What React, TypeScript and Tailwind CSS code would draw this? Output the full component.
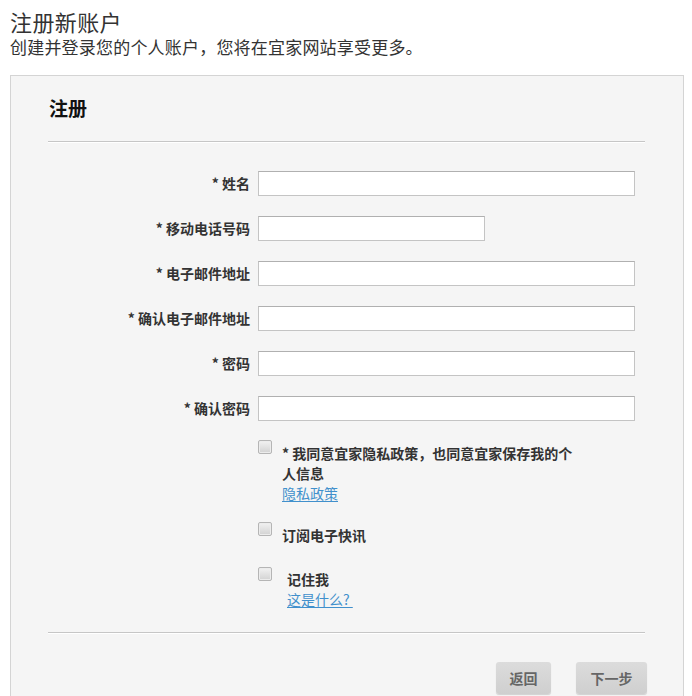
import React from "react";

const fields = [
  { label: "* 姓名", short: false },
  { label: "* 移动电话号码", short: true },
  { label: "* 电子邮件地址", short: false },
  { label: "* 确认电子邮件地址", short: false },
  { label: "* 密码", short: false },
  { label: "* 确认密码", short: false },
];

const Check = () => (
  <span className="block w-[14px] h-[14px] shrink-0 rounded-[2px] border border-[#b5b5b5] bg-gradient-to-b from-[#f2f2f2] to-[#d2d2d2] shadow-[inset_0_0_0_1px_#ececec]" />
);

const App = () => {
  return (
    <div
      className="w-[692px] h-[696px] overflow-hidden bg-white text-[#333]"
      style={{ fontFamily: '"Noto Sans CJK SC", "Noto Sans", sans-serif' }}
    >
      <div className="px-[10px] pt-[7px]">
        <h1 className="text-[22px] leading-[28px] font-normal tracking-[0.4px] text-[#333]">注册新账户</h1>
        <p className="text-[17px] leading-[24px] tracking-[0.2px] text-[#333]">
          创建并登录您的个人账户，您将在宜家网站享受更多。
        </p>
      </div>

      <div className="ml-[10px] mr-[8px] mt-[16px] h-[700px] border border-[#d4d4d4] bg-[#f5f5f5] pl-[37px] pr-[38px] pt-[18px]">
        <h2 className="pl-[1px] text-[19px] leading-[28px] font-bold text-[#111]">注册</h2>
        <div className="mt-[19px] border-t border-b border-t-[#c6c6c6] border-b-white" />

        <div className="mt-[28px] flex flex-col gap-[20px]">
          {fields.map((f) => (
            <div key={f.label} className="flex items-center gap-[8px]">
              <label className="w-[202px] shrink-0 text-right text-[14px] font-bold leading-[25px] text-[#333]">
                {f.label}
              </label>
              <input
                type="text"
                className={`${f.short ? "w-[227px]" : "w-[377px]"} h-[25px] border border-[#c4c4c4] border-t-[#b0b0b0] bg-white outline-none`}
              />
            </div>
          ))}
        </div>

        <div className="ml-[210px] mt-[19px] flex flex-col">
          <div className="flex gap-[10px]">
            <Check />
            <div className="mt-[3px] w-[296px] text-[14px] leading-[20px]">
              <p className="font-bold text-[#333]">* 我同意宜家隐私政策，也同意宜家保存我的个人信息</p>
              <a className="block text-[#4190cc] underline underline-offset-2 decoration-[#4190cc]">隐私政策</a>
            </div>
          </div>

          <div className="mt-[19px] flex gap-[10px]">
            <Check />
            <p className="mt-[3px] text-[14px] font-bold leading-[20px] text-[#333]">订阅电子快讯</p>
          </div>

          <div className="mt-[22px] flex gap-[15px]">
            <Check />
            <div className="mt-[2px] text-[14px] leading-[20px]">
              <p className="font-bold text-[#333]">记住我</p>
              <a className="block text-[#4190cc] underline underline-offset-2 decoration-[#4190cc]">这是什么?&nbsp;</a>
            </div>
          </div>
        </div>

        <div className="mt-[23px] border-t border-b border-t-[#c6c6c6] border-b-white" />

        <div className="mt-[28px] mr-[-2px] flex justify-end gap-[25px]">
          <button className="h-[32px] w-[55px] rounded-[3px] bg-gradient-to-b from-[#dcdcdc] to-[#cfcfcf] text-[14px] font-bold text-[#666] shadow-[0_1px_1px_rgba(0,0,0,0.15)]">
            返回
          </button>
          <button className="h-[32px] w-[71px] rounded-[3px] bg-gradient-to-b from-[#dcdcdc] to-[#cfcfcf] text-[14px] font-bold text-[#666] shadow-[0_1px_1px_rgba(0,0,0,0.15)]">
            下一步
          </button>
        </div>
      </div>
    </div>
  );
};

export default App;
